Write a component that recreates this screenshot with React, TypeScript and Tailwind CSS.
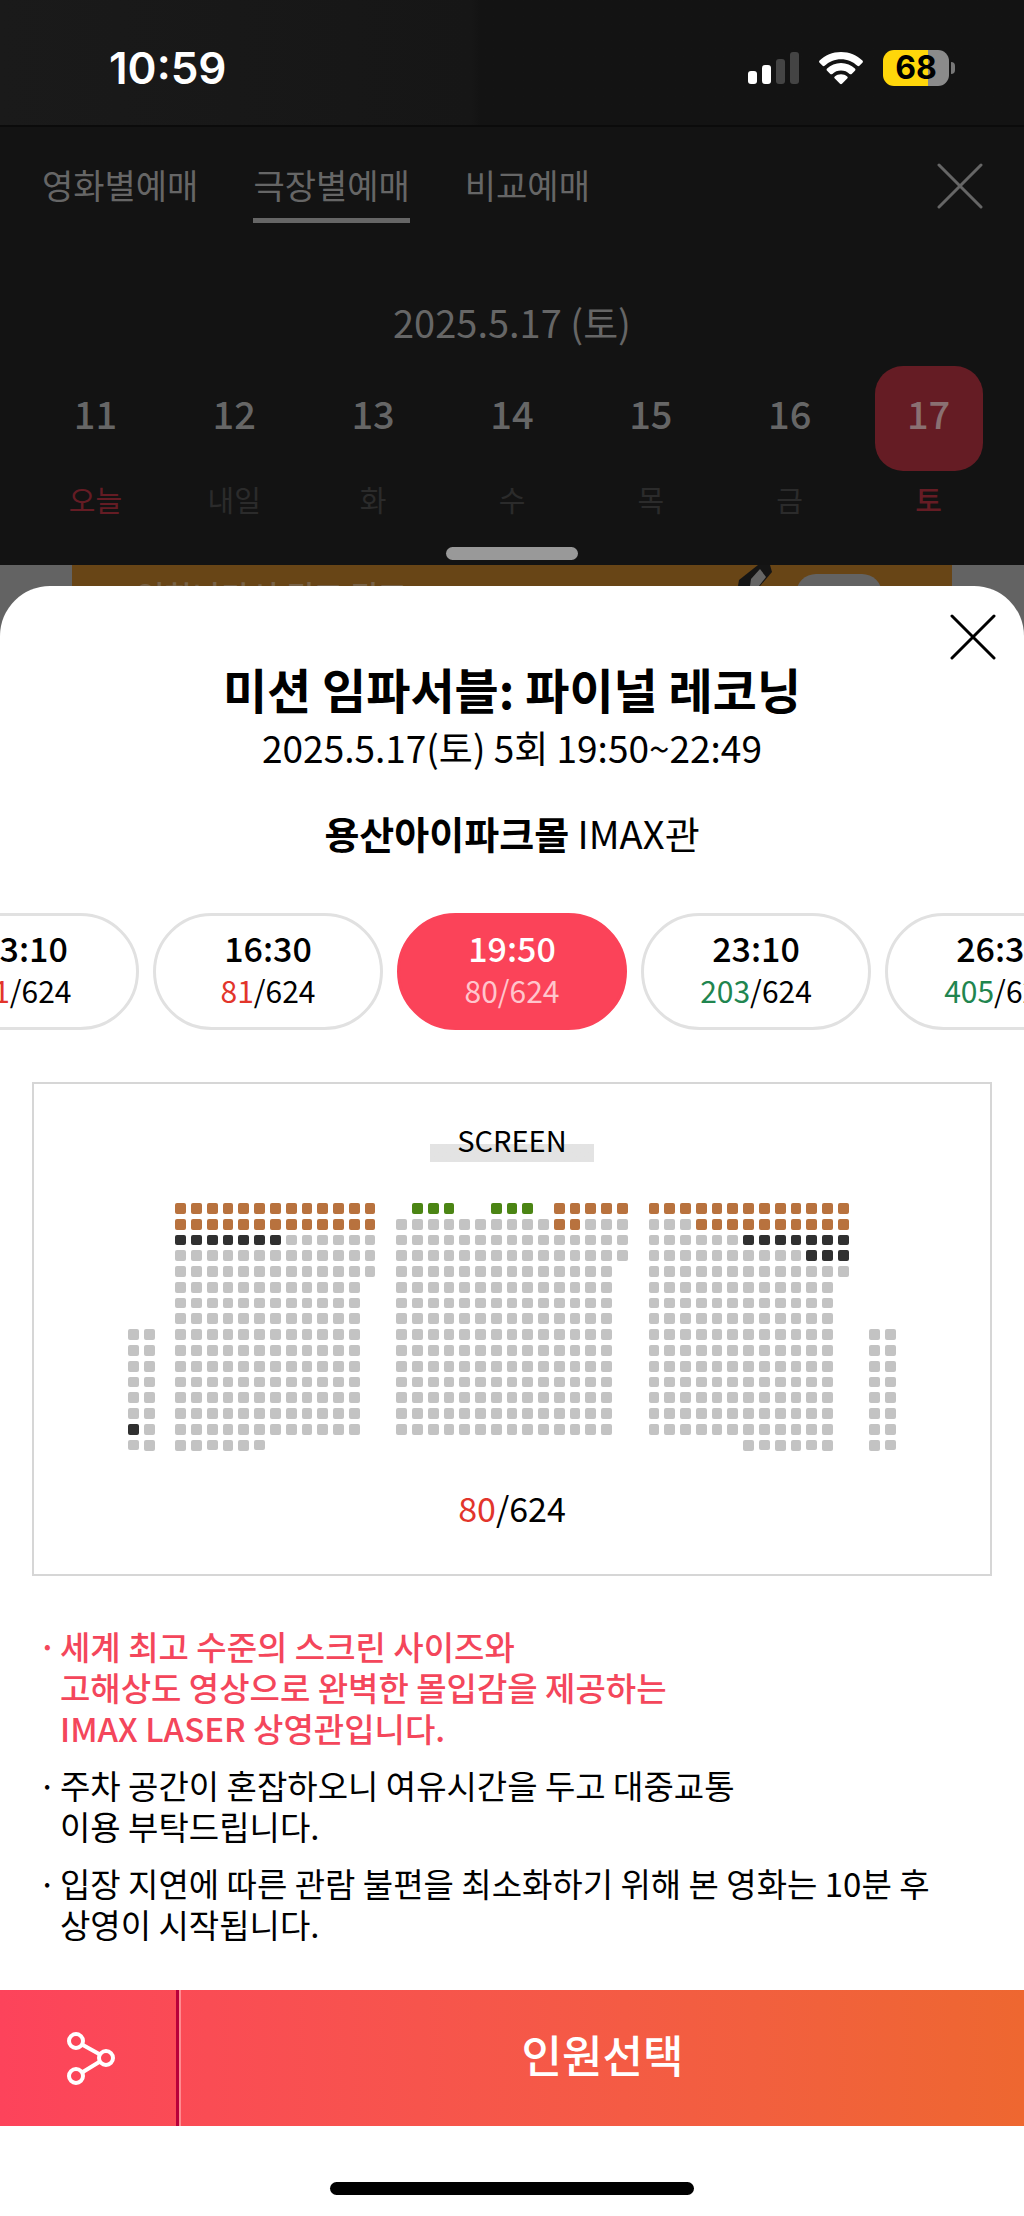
import { useState } from "react"
import clsx from "clsx"

interface Day {
  date: number
  label: string
}

interface Showtime {
  time: string
  left: number
}

const TOTAL_SEATS = 624

const tabs = ["영화별예매", "극장별예매", "비교예매"]

const days: Day[] = [
  { date: 11, label: "오늘" },
  { date: 12, label: "내일" },
  { date: 13, label: "화" },
  { date: 14, label: "수" },
  { date: 15, label: "목" },
  { date: 16, label: "금" },
  { date: 17, label: "토" },
]

const showtimes: Showtime[] = [
  { time: "13:10", left: 81 },
  { time: "16:30", left: 81 },
  { time: "19:50", left: 80 },
  { time: "23:10", left: 203 },
  { time: "26:30", left: 405 },
]

// o = sold, b = restricted view, g = accessible, k = available, . = aisle
const seatRows = [
  "...bbbbbbbbbbbbb..ggg..ggg.bbbbb.bbbbbbbbbbbbb...",
  "...bbbbbbbbbbbbb.oooooooooobbooo.ooobbbbbbbbbb...",
  "...kkkkkkkoooooo.ooooooooooooooo.ooooookkkkkkk...",
  "...ooooooooooooo.ooooooooooooooo.ooooooooookkk...",
  "...ooooooooooooo.oooooooooooooo..ooooooooooooo...",
  "...oooooooooooo..oooooooooooooo..oooooooooooo....",
  "...oooooooooooo..oooooooooooooo..oooooooooooo....",
  "...oooooooooooo..oooooooooooooo..oooooooooooo....",
  "oo.oooooooooooo..oooooooooooooo..oooooooooooo..oo",
  "oo.oooooooooooo..oooooooooooooo..oooooooooooo..oo",
  "oo.oooooooooooo..oooooooooooooo..oooooooooooo..oo",
  "oo.oooooooooooo..oooooooooooooo..oooooooooooo..oo",
  "oo.oooooooooooo..oooooooooooooo..oooooooooooo..oo",
  "oo.oooooooooooo..oooooooooooooo..oooooooooooo..oo",
  "ko.oooooooooooo..oooooooooooooo..oooooooooooo..oo",
  "oo.oooooo..............................oooooo..oo",
]

const seatColors: Record<string, string> = {
  o: "bg-[#c3c3c3]",
  b: "bg-[#b8723e]",
  g: "bg-[#4b8514]",
  k: "bg-[#303030]",
  ".": "",
}

const notices = [
  {
    lines: ["세계 최고 수준의 스크린 사이즈와", "고해상도 영상으로 완벽한 몰입감을 제공하는", "IMAX LASER 상영관입니다."],
    highlight: true,
  },
  { lines: ["주차 공간이 혼잡하오니 여유시간을 두고 대중교통", "이용 부탁드립니다."] },
  { lines: ["입장 지연에 따른 관람 불편을 최소화하기 위해 본 영화는 10분 후", "상영이 시작됩니다."] },
]

function CloseIcon() {
  return (
    <svg viewBox="0 0 46 46" className="size-[46px]" fill="none" stroke="currentColor" strokeWidth="3" strokeLinecap="round">
      <path d="M2 2 44 44M44 2 2 44" />
    </svg>
  )
}

function StatusBar() {
  return (
    <div className="flex h-[127px] items-start justify-between border-b-2 border-[#0b0b0b] pt-10 pr-[69px] pl-[109px] text-white">
      <span className="font-['Inter'] text-[44px] leading-14 font-semibold">10:59</span>
      <div className="flex h-14 items-center gap-5">
        <svg viewBox="0 0 51 34" className="h-[34px] w-[51px]">
          <rect x="0" y="20" width="9" height="13" rx="3" fill="#fff" />
          <rect x="14" y="14" width="9" height="19" rx="3" fill="#fff" />
          <rect x="28" y="8" width="9" height="25" rx="3" fill="#444" />
          <rect x="42" y="1" width="9" height="32" rx="3" fill="#444" />
        </svg>
        <svg viewBox="0 0 44 34" className="h-[34px] w-11">
          <path
            d="M22 1C13.600 1 6 4.300 .6 9.600c-.7.700-.7 1.500 0 2.200l3 3c.6.600 1.400.6 2 0C9.900 10.700 15.700 8.200 22 8.200s12.100 2.500 16.400 6.600c.6.600 1.400.6 2 0l3-3c.7-.7.7-1.500 0-2.200C38 4.300 30.400 1 22 1Z"
            fill="#fff"
          />
          <path
            d="M22 12c-5.400 0-10.300 2.100-13.900 5.500-.7.700-.7 1.500 0 2.200l3.200 3.200c.6.600 1.400.6 2.100 0 2.300-2.100 5.300-3.300 8.600-3.300s6.300 1.200 8.600 3.300c.7.600 1.500.6 2.100 0l3.200-3.200c.7-.7.7-1.500 0-2.200C32.300 14.100 27.400 12 22 12Z"
            fill="#fff"
          />
          <path
            d="M22 23.200c-2.400 0-4.500.8-6.200 2.200-.7.600-.7 1.400 0 2.100l5.200 5.300c.6.600 1.400.6 2 0l5.200-5.300c.7-.7.7-1.500 0-2.100-1.700-1.400-3.800-2.200-6.200-2.200Z"
            fill="#fff"
          />
        </svg>
        <div className="flex items-center gap-[2px]">
          <div className="flex h-9 w-[66px] items-center justify-center rounded-[11px] bg-linear-to-r from-[#ffd60a] from-68% to-[#8b8b8b] to-68% font-['Inter'] text-[32px] font-bold text-black">
            68
          </div>
          <div className="h-3 w-1 rounded-r-full bg-[#777]" />
        </div>
      </div>
    </div>
  )
}

function SeatMap() {
  return (
    <section className="mx-8 mt-[52px] flex flex-col items-center border-2 border-[#d6d6d6] pt-[33px] pb-[41px]">
      <div className="bg-linear-to-b from-transparent from-60% to-[#e3e3e3] to-60% px-[27px] text-[29px] leading-[45px]">SCREEN</div>
      <div className="mt-[41px] grid w-[768px] max-w-full grid-cols-[repeat(49,minmax(0,1fr))] gap-[5px]">
        {seatRows.map((row, r) =>
          row.split("").map((seat, c) => <span key={`${r}-${c}`} className={clsx("aspect-square rounded-[2px]", seatColors[seat])} />)
        )}
      </div>
      <p className="mt-8 text-[34px] leading-[50px]">
        <span className="text-[#e2352b]">80</span>/{TOTAL_SEATS}
      </p>
    </section>
  )
}

export default function App() {
  const [activeTab, setActiveTab] = useState("극장별예매")
  const [activeDay, setActiveDay] = useState(17)
  const [activeTime, setActiveTime] = useState("19:50")

  return (
    <div className="w-full overflow-hidden bg-white font-['Noto_Sans_CJK_KR',sans-serif] text-black">
      <header className="bg-[#131313] bg-linear-to-r from-[#1a1a1a] from-0% via-[#161616] via-46% to-[#131313] to-47%">
        <StatusBar />
        <div className="bg-[#131313]">
          <div className="flex items-start justify-between pt-9 pr-[41px] pl-[42px]">
            <nav className="flex gap-[55px]">
              {tabs.map((tab) => (
                <button
                  key={tab}
                  onClick={() => setActiveTab(tab)}
                  className={clsx(
                    "border-b-[5px] pb-[11px] text-[34px] leading-[44px] text-[#666]",
                    activeTab === tab ? "border-[#666]" : "border-transparent"
                  )}
                >
                  {tab}
                </button>
              ))}
            </nav>
            <button aria-label="닫기" className="text-[#666]">
              <CloseIcon />
            </button>
          </div>

          <p className="mt-[72px] text-center text-[38px] leading-[54px] text-[#666]">2025.5.17 (토)</p>

          <div className="mt-[17px] grid grid-cols-7 px-[26px]">
            {days.map((day) => (
              <button key={day.date} onClick={() => setActiveDay(day.date)} className="flex flex-col items-center gap-[6px]">
                <span
                  className={clsx(
                    "flex h-[105px] w-[108px] items-center justify-center rounded-[28px] pb-3 text-[38px] font-medium",
                    activeDay === day.date ? "bg-[#651c24] text-[#8a7072]" : "text-[#666]"
                  )}
                >
                  {day.date}
                </span>
                <span
                  className={clsx(
                    "text-[29px] leading-[44px]",
                    day.date === 11 || activeDay === day.date ? "text-[#651c24]" : "text-[#2b2b2b]",
                    activeDay === day.date && "font-medium"
                  )}
                >
                  {day.label}
                </span>
              </button>
            ))}
          </div>
          <div className="flex h-11 items-end justify-center pb-[5px]">
            <div className="h-[13px] w-[132px] rounded-full bg-[#999]" />
          </div>
        </div>
      </header>

      <div className="bg-[#636363]">
        {/* only the top edge of the promo banner shows above the sheet */}
        <div className="mx-[72px] flex h-[21px] justify-between overflow-hidden bg-[#684516] pr-[70px] pl-16">
          <span className="pt-2 text-[31px] leading-[44px] font-medium text-[#776248]">영화나라서 퀴즈 퀴즈</span>
          <div className="flex gap-5">
            <svg viewBox="0 0 40 21" className="h-[21px] w-10">
              <path d="M22 0h12l2 7L24 21H2l1-6Z" fill="#151515" />
              <path d="M24 4 30 12 23 21H14L15 14Z" fill="#666" />
            </svg>
            <div className="mt-[9px] h-10 w-[86px] rounded-[20px] bg-[#636363]" />
          </div>
        </div>

        <main className="rounded-t-[50px] bg-white">
          <div className="flex justify-end pt-[28px] pr-[28px]">
            <button aria-label="닫기">
              <CloseIcon />
            </button>
          </div>
          <div className="text-center">
            <h1 className="text-[48px] leading-[56px] font-bold">미션 임파서블: 파이널 레코닝</h1>
            <p className="mt-1 text-[37px] leading-[54px]">2025.5.17(토) 5회 19:50~22:49</p>
            <p className="mt-8 text-[38px] leading-[54px]">
              <strong>용산아이파크몰</strong> IMAX관
            </p>
          </div>

          <div className="mt-[53px] flex justify-center gap-[14px]">
            {showtimes.map(({ time, left }) => {
              const active = activeTime === time
              return (
                <button
                  key={time}
                  onClick={() => setActiveTime(time)}
                  className={clsx(
                    "h-[117px] w-[230px] shrink-0 rounded-full border-3 pb-[6px]",
                    active ? "border-[#fb4359] bg-[#fb4359] text-white" : "border-[#e1e1e1] bg-white"
                  )}
                >
                  <span className="block text-[34px] leading-[42px] font-medium">{time}</span>
                  <span className={clsx("block text-[30px] leading-[42px]", active && "text-[#ffc5cc]")}>
                    <span className={clsx(!active && (left > 100 ? "text-[#21854f]" : "text-[#e2352b]"))}>{left}</span>/{TOTAL_SEATS}
                  </span>
                </button>
              )
            })}
          </div>

          <SeatMap />

          <ul className="mt-[50px] flex flex-col gap-4 pr-10 pl-[38px] text-[33px] leading-[41px]">
            {notices.map(({ lines, highlight }) => (
              <li key={lines[0]} className={clsx("flex", highlight && "font-medium text-[#f4465b]")}>
                <span className="w-[22px] shrink-0">·</span>
                <p>
                  {lines.map((line) => (
                    <span key={line} className="block">
                      {line}
                    </span>
                  ))}
                </p>
              </li>
            ))}
          </ul>

          <div className="mt-[45px] flex h-[136px] bg-linear-to-r from-[#fd435b] to-[#ee6730] text-white">
            <button aria-label="공유" className="flex w-[179px] items-center justify-center border-r-3 border-[#b8003a] pl-[6px]">
              <svg viewBox="0 0 50 56" className="h-14 w-[50px]" fill="none" stroke="currentColor" strokeWidth="4">
                <circle cx="10" cy="11" r="7" />
                <circle cx="40" cy="28" r="7" />
                <circle cx="10" cy="46" r="7" />
                <path d="M16 14.500 34 24.500M16 42.500 34 31.500" />
              </svg>
            </button>
            <button className="flex-1 border-l-2 border-[#ff8a8f] pb-2 text-[44px] font-medium">인원선택</button>
          </div>
          <div className="flex h-[90px] items-end justify-center pb-[21px]">
            <div className="h-[13px] w-[364px] rounded-full bg-black" />
          </div>
        </main>
      </div>
    </div>
  )
}
